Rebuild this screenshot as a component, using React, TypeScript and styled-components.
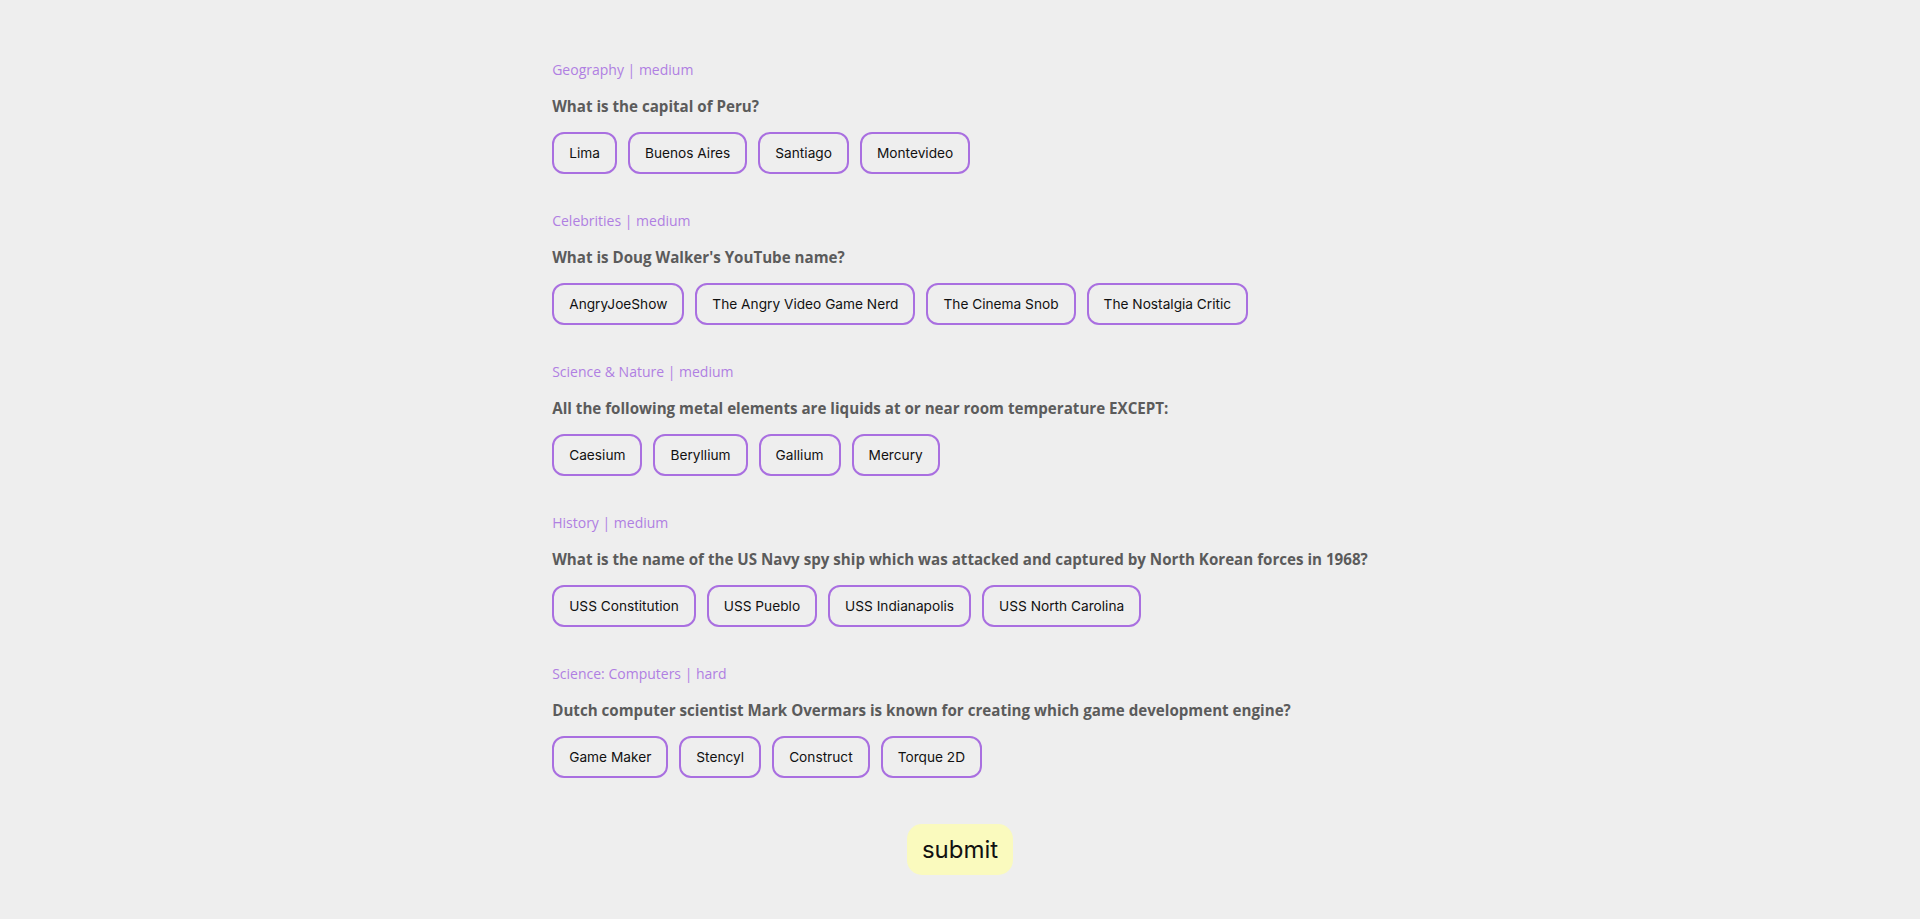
import React from "react";
import styled, { createGlobalStyle } from "styled-components";

const Global = createGlobalStyle`
  html, body { margin: 0; padding: 0; background: #eeeeee; }
  body { font-family: "Noto Sans", "Open Sans", sans-serif; }
`;

const Page = styled.main`
  display: flex;
  flex-direction: column;
  align-items: center;
  padding: 60px 0 40px;
`;

const Quiz = styled.div`
  display: flex;
  flex-direction: column;
  gap: 37px;
  width: max-content;
`;

const Block = styled.section`
  display: flex;
  flex-direction: column;
`;

const Category = styled.div`
  font-family: "Open Sans", "Noto Sans", sans-serif;
  font-size: 14px;
  line-height: 20px;
  color: #b07fe2;
`;

const Question = styled.h2`
  margin: 16px 0 16px;
  font-family: "Open Sans", "Noto Sans", sans-serif;
  font-size: 15.15px;
  line-height: 20px;
  font-weight: 700;
  color: #5b5b5b;
`;

const Answers = styled.div`
  display: flex;
  gap: 11px;
`;

const Chip = styled.button`
  height: 42px;
  padding: 0 15px;
  border: 2px solid #a96fe0;
  border-radius: 12px;
  background: transparent;
  font-family: "Inter", sans-serif;
  font-size: 13.7px;
  color: #111;
  cursor: pointer;
`;

const Submit = styled.button`
  margin-top: 46px;
  width: 106px;
  height: 51px;
  border: none;
  border-radius: 15px;
  background: #fafabe;
  font-family: "Inter", sans-serif;
  font-size: 24px;
  color: #111;
  cursor: pointer;
`;

const data = [
  {
    cat: "Geography | medium",
    q: "What is the capital of Peru?",
    a: ["Lima", "Buenos Aires", "Santiago", "Montevideo"],
  },
  {
    cat: "Celebrities | medium",
    q: "What is Doug Walker's YouTube name?",
    a: ["AngryJoeShow", "The Angry Video Game Nerd", "The Cinema Snob", "The Nostalgia Critic"],
  },
  {
    cat: "Science & Nature | medium",
    q: "All the following metal elements are liquids at or near room temperature EXCEPT:",
    a: ["Caesium", "Beryllium", "Gallium", "Mercury"],
  },
  {
    cat: "History | medium",
    q: "What is the name of the US Navy spy ship which was attacked and captured by North Korean forces in 1968?",
    a: ["USS Constitution", "USS Pueblo", "USS Indianapolis", "USS North Carolina"],
  },
  {
    cat: "Science: Computers | hard",
    q: "Dutch computer scientist Mark Overmars is known for creating which game development engine?",
    a: ["Game Maker", "Stencyl", "Construct", "Torque 2D"],
  },
];

export default function App() {
  return (
    <>
      <Global />
      <Page>
        <Quiz>
          {data.map((d) => (
            <Block key={d.q}>
              <Category>{d.cat}</Category>
              <Question>{d.q}</Question>
              <Answers>
                {d.a.map((x) => (
                  <Chip key={x}>{x}</Chip>
                ))}
              </Answers>
            </Block>
          ))}
        </Quiz>
        <Submit>submit</Submit>
      </Page>
    </>
  );
}
